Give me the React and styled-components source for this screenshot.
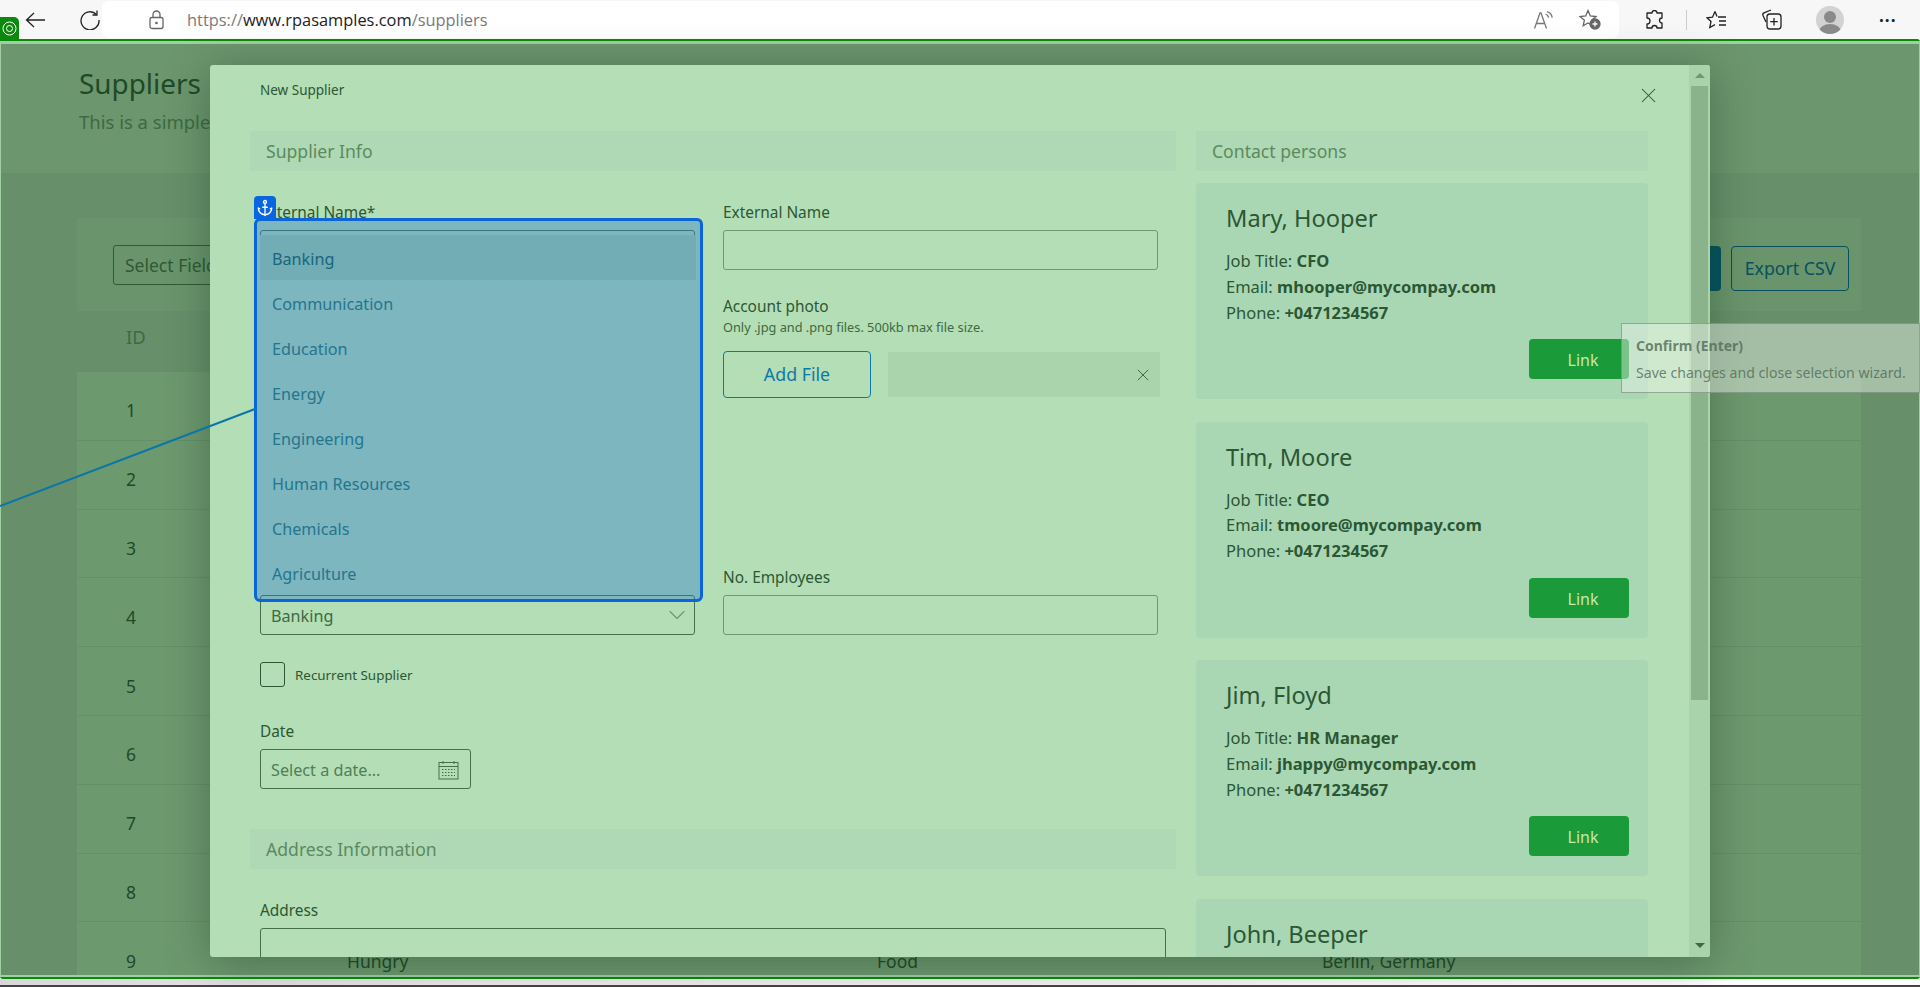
import React from "react"
import styled, { createGlobalStyle } from "styled-components"
import { Anchor, ChevronDown, X } from "lucide-react"

const GlobalStyle = createGlobalStyle`
  html, body {
    margin: 0;
    padding: 0;
    background: #fff;
    font-family: "Noto Sans", "Open Sans", sans-serif;
  }
  * {
    box-sizing: border-box;
  }
`

const Root = styled.div`
  position: relative;
  width: 1920px;
  height: 987px;
  overflow: hidden;
  display: flex;
  flex-direction: column;
`

/* browser chrome */
const BrowserBar = styled.div`
  height: 39px;
  flex: none;
  background: #f7f7f7;
  display: flex;
  align-items: center;
  padding-left: 25px;
`
const ChromeIcon = styled.svg`
  flex: none;
  display: block;
  margin-left: ${(p) => p.$left || 0}px;
  fill: none;
  stroke: ${(p) => p.$color || "#222"};
  stroke-width: 1.3;
`
const AddressBar = styled.div`
  width: 1517px;
  height: 37px;
  margin-left: 2px;
  background: #fff;
  border-radius: 7px;
  display: flex;
  align-items: center;
  padding-left: 47px;
  flex: none;
`
const Url = styled.div`
  margin-left: 23px;
  font-family: "Open Sans", sans-serif;
  font-size: 16.4px;
  color: #7a7a7a;
  span {
    color: #222;
  }
`
const AddressIcons = styled.div`
  margin-left: auto;
  padding-right: 18px;
  display: flex;
  align-items: center;
  gap: 25px;
`
const ChromeDivider = styled.div`
  width: 1px;
  height: 20px;
  margin-left: 22px;
  background: #ccc;
  flex: none;
`
const Avatar = styled.div`
  position: relative;
  width: 28px;
  height: 28px;
  margin-left: 34px;
  border-radius: 50%;
  background: #d2d2d2;
  overflow: hidden;
  flex: none;
  &::before {
    content: "";
    position: absolute;
    left: 8px;
    top: 5px;
    width: 12px;
    height: 12px;
    border-radius: 50%;
    background: #8a8a8a;
  }
  &::after {
    content: "";
    position: absolute;
    left: 3px;
    top: 18px;
    width: 22px;
    height: 16px;
    border-radius: 50%;
    background: #8a8a8a;
  }
`
const Dots = styled.div`
  margin-left: 35px;
  font-family: "Open Sans", sans-serif;
  font-size: 17px;
  font-weight: 700;
  letter-spacing: 1px;
  line-height: 1;
  margin-top: -8px;
  color: #222;
`
const TargetBadge = styled.div`
  position: absolute;
  left: 0;
  top: 17px;
  width: 19px;
  height: 23px;
  background: #0a8a0a;
  border-radius: 0 5px 0 0;
  display: flex;
  align-items: center;
  justify-content: center;
`

/* highlighted page frame */
const Frame = styled.div`
  height: 940px;
  flex: none;
  border-top: 2px solid #0a8a0a;
  border-bottom: 2px solid #0a8a0a;
  border-radius: 0 3px 3px 3px;
`
const Page = styled.div`
  height: 100%;
  overflow: hidden;
  background: #6a946c;
  border: 1px solid #a0cfa2;
  border-top-width: 3px;
  border-bottom-width: 2px;
  display: flex;
  flex-direction: column;
`
const BottomStrip = styled.div`
  flex: 1;
  display: flex;
  flex-direction: column;
  background: linear-gradient(90deg, #d8d8d8, #eee 25%, #fff 80%);
  &::after {
    content: "";
    margin-top: auto;
    height: 2px;
    background: #444;
  }
`

/* page behind the dialog */
const PageHead = styled.div`
  height: 129px;
  flex: none;
  padding: 19px 0 0 78px;
  background: #6c966e;
`
const PageTitle = styled.div`
  font-size: 27.9px;
  line-height: 40px;
  color: #1e4a28;
`
const PageSub = styled.div`
  margin-top: 6px;
  font-size: 18.5px;
  line-height: 26px;
  color: #3d6a42;
`
const TableArea = styled.div`
  flex: 1;
  background: #67906a;
  padding: 45px 58px 0 76px;
`
const TableCard = styled.div`
  background: #6d996f;
`
const TableToolbar = styled.div`
  height: 93px;
  padding: 27px 12px 0 36px;
  background: #6a956c;
  display: flex;
  align-items: flex-start;
  justify-content: space-between;
`
const FieldSelect = styled.div`
  width: 260px;
  height: 40px;
  padding-left: 11px;
  border: 1px solid #2e5a36;
  border-radius: 3px;
  font-size: 17.5px;
  line-height: 38px;
  color: #2e5a36;
`
const ToolbarActions = styled.div`
  display: flex;
  gap: 10px;
  margin-top: 1px;
`
const SolidButton = styled.div`
  width: 120px;
  height: 45px;
  border-radius: 4px;
  background: #04525f;
`
const ExportButton = styled.div`
  width: 118px;
  height: 45px;
  border: 1px solid #07505e;
  border-radius: 4px;
  font-size: 17.7px;
  line-height: 43px;
  text-align: center;
  color: #07505e;
`
const HeadRow = styled.div`
  height: 61px;
  padding-left: 49px;
  background: #67906a;
  font-size: 18.5px;
  line-height: 52px;
  color: #3d6a42;
`
const TableRow = styled.div`
  height: 68.8px;
  padding: 9px 0 0 49px;
  border-bottom: 1px solid #639066;
  display: grid;
  grid-template-columns: 221px 530px 445px 1fr;
  align-items: center;
  font-size: 17.5px;
  color: #1e4a28;
`

/* dialog */
const Modal = styled.div`
  position: absolute;
  left: 210px;
  top: 65px;
  width: 1500px;
  height: 892px;
  display: flex;
  overflow: hidden;
  background: #b4deb5;
  border-radius: 3px;
  box-shadow: 0 6px 44px rgba(20, 50, 25, 0.38);
`
const ModalBody = styled.div`
  position: relative;
  flex: 1;
  padding: 15px 0 0 40px;
  overflow: hidden;
`
const ModalTitle = styled.div`
  height: 20px;
  margin-bottom: 31px;
  padding-left: 10px;
  font-size: 13.5px;
  line-height: 20px;
  color: #2b5733;
`
const CloseButton = styled.div`
  position: absolute;
  right: 28px;
  top: 18px;
  color: #2b5733;
  line-height: 0;
`
const ModalColumns = styled.div`
  display: grid;
  grid-template-columns: 926px 452px;
  column-gap: 20px;
  align-items: start;
`
const SectionHead = styled.div`
  height: 40px;
  padding-left: 16px;
  background: #aed9b4;
  font-size: 17.6px;
  line-height: 40px;
  color: #5c8a60;
`
const FormGrid = styled.div`
  padding: 31px 0 0 10px;
  display: grid;
  grid-template-columns: 435px 435px;
  grid-template-rows: auto 245px auto;
  column-gap: 28px;
  row-gap: 26px;
`
const Label = styled.div`
  height: 22px;
  margin-bottom: 6px;
  font-size: 15.4px;
  line-height: 22px;
  color: #2b5733;
`
const Input = styled.div`
  height: ${(p) => p.$height || 40}px;
  width: ${(p) => p.$width || "100%"};
  padding: 2px 11px 0 10px;
  display: flex;
  align-items: center;
  justify-content: space-between;
  border: 1px solid ${(p) => (p.$muted ? "#6d9a72" : "#44714a")};
  border-radius: 3px;
  font-size: 16.2px;
  color: #3d6a42;
`
const PhotoLabel = styled(Label)`
  margin-bottom: 0;
`
const Hint = styled.div`
  height: 19px;
  margin-bottom: 14px;
  font-size: 12.75px;
  line-height: 19px;
  color: #3d6a42;
`
const FileRow = styled.div`
  display: flex;
  gap: 17px;
  align-items: center;
  width: 437px;
`
const AddFile = styled.div`
  width: 148px;
  height: 47px;
  flex: none;
  border: 1px solid #0f78a8;
  border-radius: 4px;
  font-size: 17.8px;
  line-height: 45px;
  text-align: center;
  color: #0f78a8;
`
const FileBox = styled.div`
  flex: 1;
  height: 45px;
  padding-right: 7px;
  display: flex;
  align-items: center;
  justify-content: flex-end;
  background: #aad4ab;
  color: #2b5733;
`
const SelectChevron = styled(ChevronDown)`
  flex: none;
  margin: -2px -8px 0 0;
  color: #6d9a72;
`
const FormStack = styled.div`
  padding: 27px 0 0 10px;
`
const CheckRow = styled.div`
  display: flex;
  align-items: center;
  gap: 10px;
  margin-bottom: 34px;
`
const CheckBox = styled.div`
  width: 25px;
  height: 25px;
  border: 1px solid #2b5733;
  border-radius: 3px;
`
const CheckLabel = styled.div`
  font-size: 13.4px;
  color: #2b5733;
`
const AddressHead = styled(SectionHead)`
  margin: 40px 0 31px -10px;
`
const Placeholder = styled.span`
  color: #4f7f55;
`
const ContactList = styled.div`
  margin-top: 12px;
  display: flex;
  flex-direction: column;
  gap: 22.7px;
`
const ContactCard = styled.div`
  position: relative;
  height: 216px;
  flex: none;
  padding: 19px 0 0 30px;
  background: #a9d6b3;
  border-radius: 4px;
`
const ContactName = styled.div`
  font-size: 23.6px;
  line-height: 32px;
  margin-bottom: 14px;
  color: #2b5733;
`
const ContactLine = styled.div`
  font-size: 16.5px;
  line-height: 25.8px;
  color: #2b5733;
  b {
    font-weight: 700;
  }
`
const LinkButton = styled.div`
  position: absolute;
  right: 19px;
  top: 156px;
  width: 100px;
  height: 40px;
  padding: 2px 0 0 8px;
  background: #1a9a38;
  border-radius: 4px;
  font-size: 16px;
  line-height: 38px;
  text-align: center;
  color: #c8e8b0;
`
const Scrollbar = styled.div`
  width: 21px;
  flex: none;
  padding: 8px 2px 0;
  display: flex;
  flex-direction: column;
  align-items: center;
  background: #a9d3aa;
`
const ArrowUp = styled.div`
  width: 0;
  height: 0;
  border-left: 5px solid transparent;
  border-right: 5px solid transparent;
  border-bottom: 5px solid #6d9a72;
`
const ArrowDown = styled.div`
  width: 0;
  height: 0;
  margin-top: auto;
  margin-bottom: 9px;
  border-left: 5px solid transparent;
  border-right: 5px solid transparent;
  border-top: 5px solid #3d6a42;
`
const Thumb = styled.div`
  width: 100%;
  height: 614px;
  margin-top: 8px;
  background: #8ab28b;
`

/* element picker overlays */
const PickerBox = styled.div`
  position: absolute;
  left: 254px;
  top: 218px;
  width: 449px;
  height: 384px;
  padding: 14px 4px 0 3px;
  border: 3px solid #0a66d8;
  border-radius: 6px;
  background: rgba(42, 122, 207, 0.4);
`
const PickerItem = styled.div`
  height: 45px;
  padding: 3px 0 0 12px;
  font-size: 16.2px;
  line-height: 42px;
  color: ${(p) => (p.$active ? "#16677c" : "#24758f")};
  background: ${(p) => (p.$active ? "#72acb4" : "#7db6bf")};
`
const AnchorBadge = styled.div`
  position: absolute;
  left: 254px;
  top: 196px;
  width: 22px;
  height: 23px;
  background: #0a66e0;
  border-radius: 4px 4px 0 0;
  display: flex;
  align-items: center;
  justify-content: center;
  color: #fff;
`
const ConnectorLine = styled.svg`
  position: absolute;
  left: 0;
  top: 399px;
`
const Tooltip = styled.div`
  position: absolute;
  left: 1621px;
  top: 323px;
  width: 299px;
  height: 70px;
  padding: 11px 0 0 14px;
  background: rgba(240, 246, 240, 0.45);
  border: 1px solid rgba(110, 125, 110, 0.6);
  color: rgba(80, 105, 85, 0.8);
`
const TooltipTitle = styled.div`
  font-size: 14px;
  font-weight: 700;
  line-height: 22px;
  margin-bottom: 5px;
`
const TooltipText = styled.div`
  font-size: 14.1px;
  line-height: 22px;
  white-space: nowrap;
`

const contacts = [
  { name: "Mary, Hooper", job: "CFO", email: "mhooper@mycompay.com" },
  { name: "Tim, Moore", job: "CEO", email: "tmoore@mycompay.com" },
  { name: "Jim, Floyd", job: "HR Manager", email: "jhappy@mycompay.com" },
  { name: "John, Beeper", job: "", email: "" },
]

const industries = [
  "Banking",
  "Communication",
  "Education",
  "Energy",
  "Engineering",
  "Human Resources",
  "Chemicals",
  "Agriculture",
]

const rows = [
  { id: 1 },
  { id: 2 },
  { id: 3 },
  { id: 4 },
  { id: 5 },
  { id: 6 },
  { id: 7 },
  { id: 8 },
  { id: 9, name: "Hungry", category: "Food", location: "Berlin, Germany" },
]

const CalendarIcon = () => (
  <svg width="21" height="20" viewBox="0 0 21 20" fill="none" stroke="#44714a">
    <rect x="1" y="2.5" width="19" height="16.5" />
    <path d="M1 6.5h19M5 1v3M16 1v3" />
    <path d="M4 9.5h13M4 12.5h13M4 15.5h13" strokeDasharray="1.5 1.5" />
  </svg>
)

const Browser = () => (
  <BrowserBar>
    <ChromeIcon width="20" height="18" viewBox="0 0 20 18">
      <path d="M9 2 1.5 9 9 16M1.5 9H20" />
    </ChromeIcon>
    <ChromeIcon $left={35} width="20" height="20" viewBox="0 0 20 20">
      <path d="M16.5 4.5A9 9 0 1 0 19 10" />
      <path d="M17 0.5v4.5h-4.5" />
    </ChromeIcon>
    <AddressBar>
      <ChromeIcon $color="#666" width="15" height="20" viewBox="0 0 15 20">
        <rect x="1" y="7.5" width="13" height="11" rx="2" />
        <path d="M4 7.5V4.5a3.5 3.5 0 0 1 7 0v3" />
        <circle cx="7.5" cy="13" r="0.7" fill="#666" />
      </ChromeIcon>
      <Url>
        https://<span>www.rpasamples.com</span>/suppliers
      </Url>
      <AddressIcons>
        <ChromeIcon $color="#777" width="20" height="18" viewBox="0 0 20 18">
          <path d="M0.5 17.5 6 2h1l5.5 15.5M2.5 12.5h8" />
          <path d="M11.5 3c1.8.6 2.8 1.8 3.2 3.5M13 0.7c3 .8 4.8 3 5.2 6" />
        </ChromeIcon>
        <ChromeIcon $color="#666" width="22" height="21" viewBox="0 0 22 21">
          <path d="M9 1.5 11.3 7l5.7.5-4.3 3.7 1.2 5.5L9 14l-4.8 2.7 1.2-5.5L1 7.5 6.7 7z" />
          <circle cx="16" cy="15" r="5" fill="#666" />
          <path d="M16 12.5v5M13.5 15h5" stroke="#fff" />
        </ChromeIcon>
      </AddressIcons>
    </AddressBar>
    <ChromeIcon $left={26} width="19" height="20" viewBox="0 0 19 20">
      <path d="M7 3a2.5 2.5 0 0 1 5 0h5v5a2.5 2.5 0 0 0 0 5v5h-5a2.5 2.5 0 0 0-5 0H2v-4a2.5 2.5 0 0 0 0-6V3z" strokeLinejoin="round" />
    </ChromeIcon>
    <ChromeDivider />
    <ChromeIcon $left={19} width="21" height="20" viewBox="0 0 21 20">
      <path d="M9 1.5 6.5 7.2 1 7.8l4 3.7L3.8 17.5l5.2-2.9" />
      <path d="M9 1.5 11 6.5" />
      <path d="M12 7h8M13 11h7M13 15h7" />
    </ChromeIcon>
    <ChromeIcon $left={34} width="21" height="21" viewBox="0 0 21 21">
      <path d="M5 13 2 6.5a2 2 0 0 1 1-2.6L10 1" />
      <rect x="6" y="5" width="14" height="15" rx="3" />
      <path d="M13 9v7.5M9.2 12.7h7.6" />
    </ChromeIcon>
    <Avatar />
    <Dots>...</Dots>
  </BrowserBar>
)

const PageBehind = () => (
  <Page>
    <PageHead>
      <PageTitle>Suppliers</PageTitle>
      <PageSub>This is a simple list of suppliers</PageSub>
    </PageHead>
    <TableArea>
      <TableCard>
        <TableToolbar>
          <FieldSelect>Select Field</FieldSelect>
          <ToolbarActions>
            <SolidButton />
            <ExportButton>Export CSV</ExportButton>
          </ToolbarActions>
        </TableToolbar>
        <HeadRow>ID</HeadRow>
        {rows.map((r) => (
          <TableRow key={r.id}>
            <span>{r.id}</span>
            <span>{r.name}</span>
            <span>{r.category}</span>
            <span>{r.location}</span>
          </TableRow>
        ))}
      </TableCard>
    </TableArea>
  </Page>
)

const SupplierForm = () => (
  <div>
    <SectionHead>Supplier Info</SectionHead>
    <FormGrid>
      <div>
        <Label>External Name*</Label>
        <Input />
      </div>
      <div>
        <Label>External Name</Label>
        <Input $muted />
      </div>
      <div />
      <div>
        <PhotoLabel>Account photo</PhotoLabel>
        <Hint>Only .jpg and .png files. 500kb max file size.</Hint>
        <FileRow>
          <AddFile>Add File</AddFile>
          <FileBox>
            <X size={20} strokeWidth={1} />
          </FileBox>
        </FileRow>
      </div>
      <div>
        <Label />
        <Input>
          Banking
          <SelectChevron size={28} strokeWidth={1} />
        </Input>
      </div>
      <div>
        <Label>No. Employees</Label>
        <Input $muted />
      </div>
    </FormGrid>
    <FormStack>
      <CheckRow>
        <CheckBox />
        <CheckLabel>Recurrent Supplier</CheckLabel>
      </CheckRow>
      <Label>Date</Label>
      <Input $width="211px">
        <Placeholder>Select a date...</Placeholder>
        <CalendarIcon />
      </Input>
      <AddressHead>Address Information</AddressHead>
      <Label>Address</Label>
      <Input $width="906px" $height={100} />
    </FormStack>
  </div>
)

const Contacts = () => (
  <div>
    <SectionHead>Contact persons</SectionHead>
    <ContactList>
      {contacts.map((c) => (
        <ContactCard key={c.name}>
          <ContactName>{c.name}</ContactName>
          <ContactLine>
            Job Title: <b>{c.job}</b>
          </ContactLine>
          <ContactLine>
            Email: <b>{c.email}</b>
          </ContactLine>
          <ContactLine>
            Phone: <b>+0471234567</b>
          </ContactLine>
          <LinkButton>Link</LinkButton>
        </ContactCard>
      ))}
    </ContactList>
  </div>
)

const App = () => (
  <Root>
    <GlobalStyle />
    <Browser />
    <TargetBadge>
      <svg width="15" height="15" viewBox="0 0 15 15" fill="none" stroke="#fff">
        <circle cx="7.5" cy="7.5" r="6.5" />
        <circle cx="7.5" cy="7.5" r="3" />
      </svg>
    </TargetBadge>
    <Frame>
      <PageBehind />
    </Frame>
    <BottomStrip />

    <Modal>
      <ModalBody>
        <ModalTitle>New Supplier</ModalTitle>
        <CloseButton>
          <X size={25} strokeWidth={1} />
        </CloseButton>
        <ModalColumns>
          <SupplierForm />
          <Contacts />
        </ModalColumns>
      </ModalBody>
      <Scrollbar>
        <ArrowUp />
        <Thumb />
        <ArrowDown />
      </Scrollbar>
    </Modal>

    <ConnectorLine width="256" height="110" viewBox="0 0 256 110">
      <line x1="0" y1="107" x2="255" y2="10" stroke="#0a76a8" strokeWidth="2" />
    </ConnectorLine>
    <PickerBox>
      {industries.map((name, i) => (
        <PickerItem key={name} $active={i === 0}>
          {name}
        </PickerItem>
      ))}
    </PickerBox>
    <AnchorBadge>
      <Anchor size={18} strokeWidth={1.8} />
    </AnchorBadge>
    <Tooltip>
      <TooltipTitle>Confirm (Enter)</TooltipTitle>
      <TooltipText>Save changes and close selection wizard.</TooltipText>
    </Tooltip>
  </Root>
)

export default App
